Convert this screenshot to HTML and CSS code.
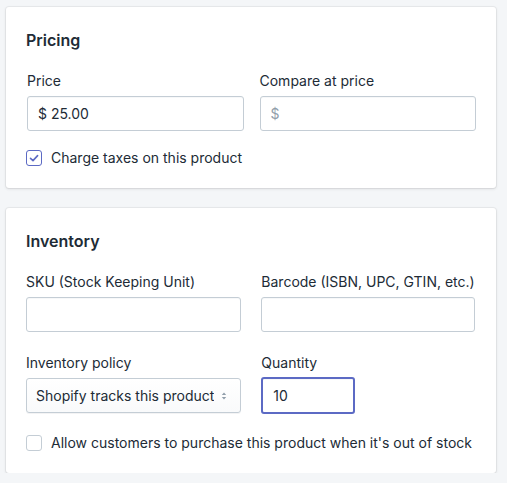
FILE: index.html
```html
<!DOCTYPE html>
<html>
<head>
<meta charset="utf-8">
<link rel="stylesheet" href="styles.css">
</head>
<body>
<div class="page">
  <section class="card card-pricing">
    <h2 class="card-title">Pricing</h2>
    <div class="grid grid-pricing">
      <div class="field">
        <label class="label">Price</label>
        <div class="input"><span class="value">$ 25.00</span></div>
      </div>
      <div class="field">
        <label class="label">Compare at price</label>
        <div class="input"><span class="placeholder">$</span></div>
      </div>
    </div>
    <div class="check-row">
      <span class="checkbox checked">
        <svg viewBox="0 0 16 16" width="16" height="16"><path d="M4.5 8.3 L7 10.6 L11.6 5.6" fill="none" stroke="#5c6ac4" stroke-width="1.6" stroke-linecap="round" stroke-linejoin="round"/></svg>
      </span>
      <span class="check-label">Charge taxes on this product</span>
    </div>
  </section>

  <section class="card card-inventory">
    <h2 class="card-title">Inventory</h2>
    <div class="grid grid-inventory">
      <div class="field">
        <label class="label">SKU (Stock Keeping Unit)</label>
        <div class="input"></div>
      </div>
      <div class="field">
        <label class="label">Barcode (ISBN, UPC, GTIN, etc.)</label>
        <div class="input"></div>
      </div>
      <div class="field">
        <label class="label">Inventory policy</label>
        <div class="select">
          <span class="select-text">Shopify tracks this product</span>
          <svg class="select-arrow" viewBox="0 0 6 10" width="6" height="10"><path d="M0.8 4 L3 1.5 L5.2 4 Z M0.8 6 L3 8.5 L5.2 6 Z" fill="#919eab"/></svg>
        </div>
      </div>
      <div class="field">
        <label class="label">Quantity</label>
        <div class="input qty"><span class="value">10</span></div>
      </div>
    </div>
    <div class="check-row">
      <span class="checkbox"></span>
      <span class="check-label">Allow customers to purchase this product when it's out of stock</span>
    </div>
  </section>
</div>
</body>
</html>
```
FILE: styles.css
```css
html, body {
  margin: 0;
  padding: 0;
  background: #f4f6f8;
}
body {
  font-family: Inter, "Noto Sans", sans-serif;
  color: #212b36;
  font-size: 14px;
}
.page {
  padding: 7px 0 0 6px;
  width: 490px;
  display: flex;
  flex-direction: column;
  gap: 20px;
}
.card {
  background: #fff;
  border-radius: 3px;
  box-shadow: 0 0 0 1px rgba(63,63,68,0.06), 0 1px 3px rgba(63,63,68,0.15);
  padding: 21px 20px 20px 20px;
}
.card-title {
  margin: 0;
  font-size: 16px;
  font-weight: 600;
  line-height: 24px;
}
.grid {
  display: grid;
  grid-template-columns: 1fr 1fr;
  margin-top: 19px;
}
.grid-pricing {
  column-gap: 16px;
  padding-left: 1px;
}
.grid-inventory {
  column-gap: 20px;
  row-gap: 21px;
  margin-right: 1px;
}
.field {
  display: flex;
  flex-direction: column;
  gap: 5px;
}
.label {
  line-height: 20px;
  font-size: 14px;
}
.input {
  box-sizing: border-box;
  height: 35px;
  border: 1px solid #c4cdd5;
  border-radius: 3px;
  box-shadow: inset 0 1px 0 0 rgba(99,115,129,0.05);
  display: flex;
  align-items: center;
  padding: 0 11px 0 10px;
  background: #fff;
}
.value { color: #212b36; }
.placeholder { color: #919eab; }
.input.qty {
  width: 94px;
  height: 37px;
  border: 2px solid #5c6ac4;
  margin-top: -1px;
  padding: 0 10px;
}
.select {
  box-sizing: border-box;
  height: 35px;
  border: 1px solid #c4cdd5;
  border-radius: 3px;
  background: linear-gradient(#fff, #f9fafb);
  box-shadow: 0 1px 0 0 rgba(22,29,37,0.05);
  display: flex;
  align-items: center;
  padding: 0 13px 0 9px;
  gap: 7px;
}
.select-text {
  flex: 1;
  white-space: nowrap;
  overflow: hidden;
}
.select-arrow { flex: none; }
.check-row {
  display: flex;
  align-items: center;
  gap: 9px;
  margin-top: 17px;
  line-height: 20px;
}
.card-inventory .check-row { margin-top: 19px; }
.checkbox {
  box-sizing: border-box;
  width: 16px;
  height: 16px;
  border: 1px solid #c4cdd5;
  border-radius: 3px;
  background: #fff;
  display: inline-flex;
  flex: none;
}
.checkbox.checked {
  border: 1px solid #5c6ac4;
}
.checkbox svg { display: block; margin: -1px; }
.check-label { white-space: nowrap; }
```
